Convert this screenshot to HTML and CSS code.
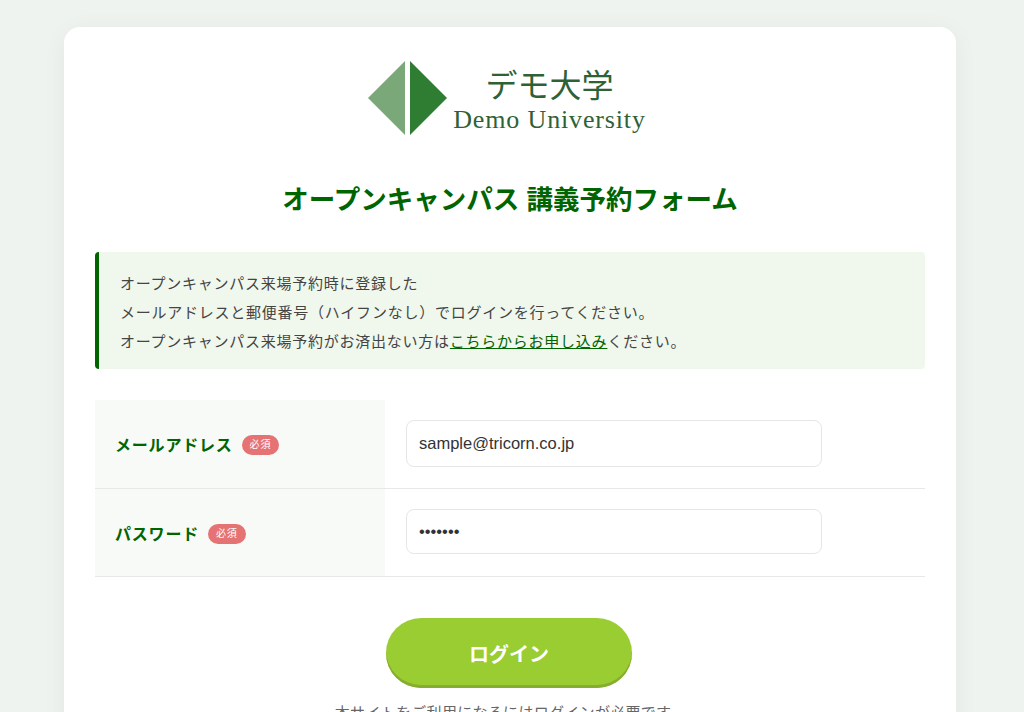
FILE: index.html
```html
<!DOCTYPE html>
<html lang="ja">
<head>
    <meta charset="UTF-8">
    <meta name="viewport" content="width=device-width, initial-scale=1.0">
    <title>オープンキャンパス 講義予約フォーム</title>
    <link rel="stylesheet" href="styles.css">
</head>
<body>
    <div class="card">
        <div class="logo">
            <svg class="logo-mark" width="82" height="76" viewBox="0 0 82 76">
                <polygon points="38,1 38,75 1,38" fill="#7aa878"/>
                <polygon points="43,1 43,75 80,38" fill="#2e7d32"/>
            </svg>
            <div class="logo-text">
                <div class="logo-ja">デモ大学</div>
                <div class="logo-en">Demo University</div>
            </div>
        </div>

        <h1>オープンキャンパス 講義予約フォーム</h1>

        <div class="notice">
            オープンキャンパス来場予約時に登録した<br>
            メールアドレスと郵便番号（ハイフンなし）でログインを行ってください。<br>
            オープンキャンパス来場予約がお済出ない方は<a href="#">こちらからお申し込み</a>ください。
        </div>

        <div class="form-table">
            <div class="form-row row-mail">
                <div class="form-label">メールアドレス<span class="required">必須</span></div>
                <div class="form-field"><input type="text" value="sample@tricorn.co.jp"></div>
            </div>
            <div class="form-row row-pass">
                <div class="form-label">パスワード<span class="required">必須</span></div>
                <div class="form-field"><input type="password" value="1234567"></div>
            </div>
        </div>

        <div class="actions">
            <button type="button" class="login-btn">ログイン</button>
        </div>
        <p class="note">本サイトをご利用になるにはログインが必要です。</p>
    </div>
</body>
</html>
```

FILE: styles.css
```css
html, body {
    height: 100%;
    overflow: hidden;
}

body {
    margin: 0;
    padding: 27px 68px 0 64px;
    box-sizing: border-box;
    background: #eef3f0;
    font-family: "Liberation Sans", "Noto Sans CJK JP", sans-serif;
    color: #444;
}

.card {
    background: #fff;
    border-radius: 16px;
    box-shadow: 0 4px 24px rgba(0, 0, 0, 0.05);
    padding: 33px 31px 40px;
}

.logo {
    display: flex;
    justify-content: center;
    gap: 4px;
    height: 76px;
    padding-right: 7px;
}

.logo-mark {
    flex: none;
}

.logo-text {
    color: #2f6136;
    font-family: "Liberation Serif", "Noto Sans CJK JP", serif;
    text-align: center;
}

.logo-ja {
    font-size: 32px;
    line-height: 38px;
    margin-top: 7px;
}

.logo-en {
    font-size: 26px;
    line-height: 29px;
    letter-spacing: 0.85px;
}

h1 {
    margin: 46px 0 0;
    color: #006400;
    font-size: 26.5px;
    line-height: 36px;
    text-align: center;
}

.notice {
    margin-top: 34px;
    padding: 17px 20px 13px 21px;
    background: #f0f7ec;
    border-left: 4px solid #006400;
    border-radius: 4px;
    font-size: 15px;
    letter-spacing: 0.05em;
    line-height: 29px;
}

.notice a {
    color: #006400;
}

.form-table {
    margin-top: 31px;
}

.form-row {
    display: flex;
    border-bottom: 1px solid #e8e8e8;
}

.row-mail {
    height: 88px;
}

.row-pass {
    height: 87px;
}

.form-label {
    width: 290px;
    flex: none;
    box-sizing: border-box;
    display: flex;
    align-items: center;
    gap: 9px;
    padding-left: 20px;
    background: #f8faf7;
    color: #006400;
    font-size: 16px;
    letter-spacing: 0.05em;
    font-weight: bold;
}

.required {
    padding: 0 8px;
    background: #e57373;
    border-radius: 10px;
    color: #fff;
    font-size: 10px;
    font-weight: normal;
    line-height: 20px;
    margin-top: 2px;
}

.form-field {
    flex: 1;
    display: flex;
    align-items: center;
    padding-left: 21px;
}

.form-field input {
    width: 416px;
    height: 47px;
    box-sizing: border-box;
    padding: 0 12px;
    border: 1px solid #e6e6e6;
    border-radius: 8px;
    background: #fff;
    font-family: "Liberation Sans", sans-serif;
    font-size: 16.5px;
    color: #333;
    outline: none;
    margin-bottom: 2px;
}

.row-pass input {
    height: 45px;
}

.actions {
    margin-top: 41px;
    padding-right: 2px;
    text-align: center;
}

.login-btn {
    width: 246px;
    height: 70px;
    border: 0;
    border-radius: 35px;
    background: #9acd32;
    box-shadow: inset 0 -3px 0 #86ad30;
    color: #fff;
    font-family: inherit;
    font-size: 20px;
    font-weight: bold;
}

.note {
    margin: 13px 0 0;
    font-size: 15px;
    letter-spacing: 0.3px;
    line-height: 24px;
    text-align: center;
    color: #666;
}
```
